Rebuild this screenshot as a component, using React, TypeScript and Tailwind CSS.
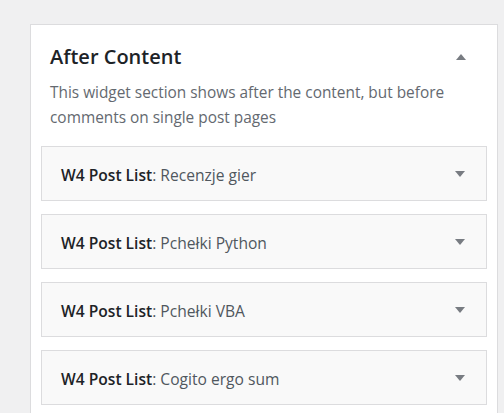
import React from 'react'

const widgets = ['Recenzje gier', 'Pchełki Python', 'Pchełki VBA', 'Cogito ergo sum']

function Arrow({ up = false }: { up?: boolean }) {
  return (
    <svg width="10" height="6" viewBox="0 0 10 6" className="block">
      {up ? (
        <polygon points="0,6 10,6 5,0" fill="#787c82" />
      ) : (
        <polygon points="0,0 10,0 5,6" fill="#787c82" />
      )}
    </svg>
  )
}

export default function App() {
  return (
    <div
      className="min-h-screen overflow-hidden bg-[#f0f0f1] pl-[30px] pt-[24px]"
      style={{ fontFamily: '"Open Sans", "Noto Sans", sans-serif' }}
    >
      <div className="w-[468px] border border-[#dcdcde] bg-white px-[10px] pb-[40px]">
        {/* Sidebar header */}
        <div className="flex items-center justify-between pl-[9px] pr-[21px] pt-[18px]">
          <h2 className="text-[20px] font-semibold leading-[28px] text-[#1d2327]">After Content</h2>
          <Arrow up />
        </div>
        <p className="mt-[9px] pl-[9px] pr-[20px] text-[15.4px] leading-[25px] text-[#646970]">
          This widget section shows after the content, but before comments on single post pages
        </p>

        {/* Widgets */}
        <div className="mt-[16px] flex flex-col gap-[13px]">
          {widgets.map((name) => (
            <div
              key={name}
              className="flex h-[55px] items-center justify-between border border-[#dcdcde] bg-[#f9f9f9] pl-[19px] pr-[21px]"
            >
              <h3 className="mt-[3px] text-[15.6px] leading-[20px] text-[#50575e]">
                <span className="font-semibold text-[#1d2327]">W4 Post List</span>: {name}
              </h3>
              <Arrow />
            </div>
          ))}
        </div>
      </div>
    </div>
  )
}
